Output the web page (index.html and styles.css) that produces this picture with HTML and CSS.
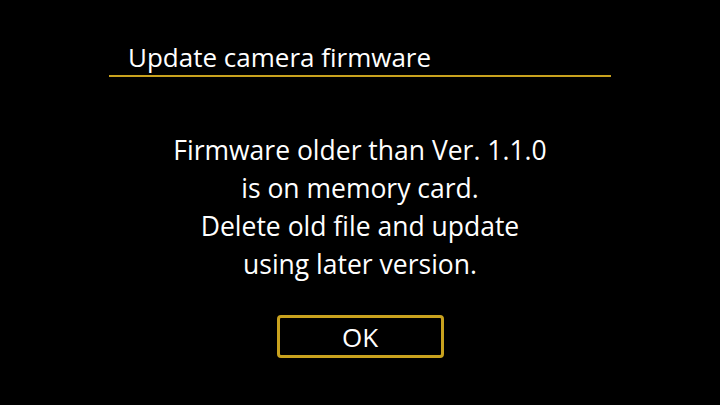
FILE: index.html
```html
<!DOCTYPE html>
<html>
<head>
<meta charset="utf-8">
<link rel="stylesheet" href="styles.css">
</head>
<body>
<div class="screen">
  <div class="header">
    <div class="title">Update camera firmware</div>
  </div>
  <div class="message">
    <div class="line">Firmware older than Ver. 1.1.0</div>
    <div class="line">is on memory card.</div>
    <div class="line">Delete old file and update</div>
    <div class="line">using later version.</div>
  </div>
  <div class="actions">
    <div class="btn">OK</div>
  </div>
</div>
</body>
</html>
```
FILE: styles.css
```css
html, body {
  margin: 0;
  padding: 0;
  background: #000;
}
.screen {
  width: 720px;
  height: 405px;
  background: #000;
  color: #fff;
  font-family: "Open Sans", "Noto Sans", sans-serif;
  display: flex;
  flex-direction: column;
  align-items: center;
  box-sizing: border-box;
  padding-top: 42px;
}
.header {
  width: 502px;
  border-bottom: 2px solid #c9a21e;
  padding: 0 0 3px 19px;
  box-sizing: border-box;
}
.title {
  font-size: 26px;
  line-height: 30px;
}
.message {
  margin-top: 54px;
  text-align: center;
  font-size: 26.5px;
  line-height: 38px;
}
.actions {
  margin-top: 32px;
}
.btn {
  width: 167px;
  height: 43px;
  box-sizing: border-box;
  border: 3px solid #c9a21e;
  border-radius: 4px;
  display: flex;
  align-items: center;
  justify-content: center;
  font-size: 26px;
}
```
